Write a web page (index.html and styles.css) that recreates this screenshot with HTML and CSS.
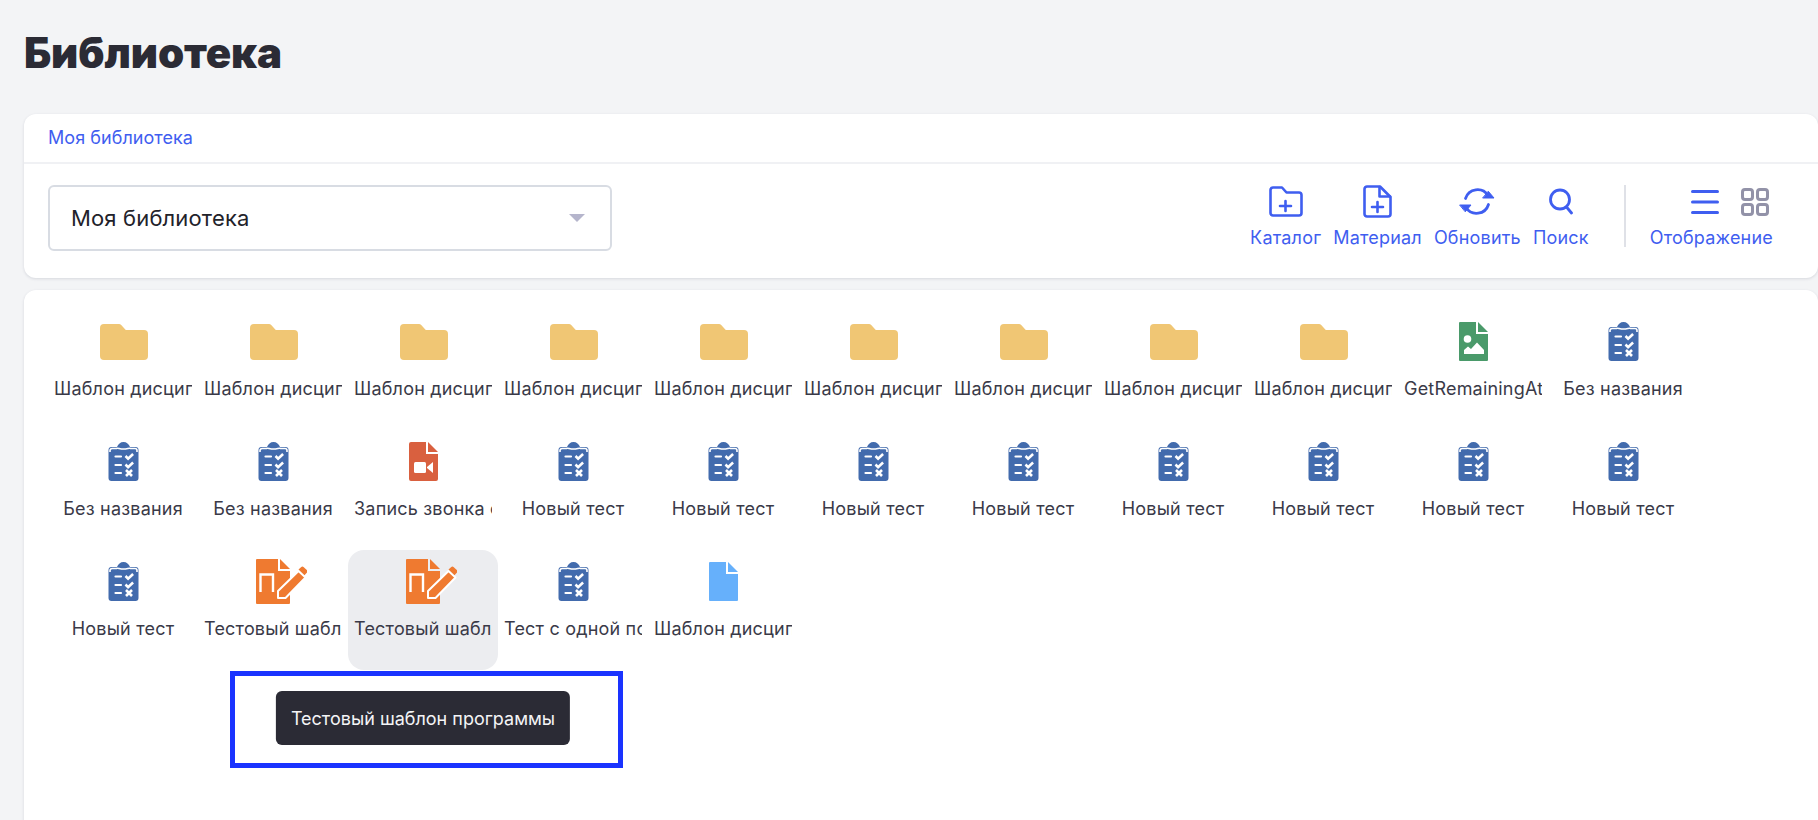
FILE: index.html
```html
<!DOCTYPE html>
<html lang="ru">
<head>
<meta charset="utf-8">
<title>Библиотека</title>
<link rel="stylesheet" href="styles.css">
</head>
<body>
<svg class="defs" width="0" height="0" aria-hidden="true">
  <symbol id="i-folder" viewBox="0 0 48 36"><path fill="#f0c674" d="M4 0H19a3 3 0 0 1 2.2 1l4.600 5H44a4 4 0 0 1 4 4V32a4 4 0 0 1-4 4H4a4 4 0 0 1-4-4V4a4 4 0 0 1 4-4Z"/></symbol>
  <symbol id="i-test" viewBox="0 0 30 39">
    <path fill="#426bad" d="M3 5h5.500C9.500 2 12 0 15 0s5.500 2 6.500 5H27a3 3 0 0 1 3 3v28a3 3 0 0 1-3 3H3a3 3 0 0 1-3-3V8a3 3 0 0 1 3-3Z"/>
    <path fill="none" stroke="#fff" stroke-width="1.600" d="M1.500 10V8.500A2 2 0 0 1 3.500 6.500H8c1-1 3 .5 7 .5s6-1.500 7-.5h4.500a2 2 0 0 1 2 2V10"/>
    <path fill="none" stroke="#fff" stroke-width="2.200" stroke-linecap="round" d="M7 14.500h5.500M7 23h5.500M7 31h5.500"/>
    <path fill="none" stroke="#fff" stroke-width="2.600" d="M17 14l2.600 2.600 5-4.600M17 22.500l2.600 2.600 5-4.600M17.500 28l6 6M23.500 28l-6 6"/>
  </symbol>
  <symbol id="i-image" viewBox="0 0 29 39">
    <path fill="#4a9a6a" d="M1 0H17V12H29V38a1 1 0 0 1-1 1H1a1 1 0 0 1-1-1V1a1 1 0 0 1 1-1Z"/>
    <path fill="#4a9a6a" d="M19 0l10 10H19Z"/>
    <circle cx="8.500" cy="17" r="3.800" fill="#fff"/>
    <path fill="#fff" d="M5 32v-4l4-3.500 3 2.500 6-6.500 7 7.500v4Z"/>
  </symbol>
  <symbol id="i-video" viewBox="0 0 29 39">
    <path fill="#d9603f" d="M2 0H17V12H29V37a2 2 0 0 1-2 2H2a2 2 0 0 1-2-2V2a2 2 0 0 1 2-2Z"/>
    <path fill="#d9603f" d="M19 0l10 10H19Z"/>
    <rect x="5" y="20" width="12" height="11" rx="1.500" fill="#fff"/>
    <path fill="#fff" d="M18 25l6-5v11l-6-5Z"/>
  </symbol>
  <symbol id="i-file" viewBox="0 0 29 39">
    <path fill="#66b0fb" d="M1 0H17V12H29V38a1 1 0 0 1-1 1H1a1 1 0 0 1-1-1V1a1 1 0 0 1 1-1Z"/>
    <path fill="#66b0fb" d="M19 0l10 10H19Z"/>
  </symbol>
  <symbol id="i-program" viewBox="0 0 51 45">
    <path fill="#ef7a30" d="M1 0H22V12H34V44a1 1 0 0 1-1 1H1a1 1 0 0 1-1-1V1a1 1 0 0 1 1-1Z"/>
    <path fill="#ef7a30" d="M24 0l10 10H24Z"/>
    <path fill="none" stroke="#fff" stroke-width="2.400" d="M4.500 33V15.500H17V33"/>
    <path fill="#ef7a30" stroke="#fff" stroke-width="2" stroke-linejoin="round" d="M22 32l20.500-20 7 6.500L29.500 39H22Z"/>
    <path fill="#ef7a30" d="M42.500 10.500l2.500-2.300a2 2 0 0 1 2.800 0l3 2.800a2 2 0 0 1 0 2.800l-2.300 2.400Z"/>
  </symbol>
</svg>

<h1 class="page-title">Библиотека</h1>

<section class="card top-card">
  <div class="crumbs"><a class="crumb">Моя библиотека</a></div>
  <div class="toolbar">
    <div class="select"><span>Моя библиотека</span><i class="caret"></i></div>
    <div class="actions">
      <button class="action">
        <svg class="tool" width="34" height="31" viewBox="0 0 34 31" fill="none" stroke="#3f5ef0" stroke-width="2.600" stroke-linejoin="round" stroke-linecap="round"><path d="M4 1.500H13l4.500 5H30a2.500 2.500 0 0 1 2.500 2.500V27a2.500 2.500 0 0 1-2.500 2.500H4A2.500 2.500 0 0 1 1.500 27V4A2.500 2.500 0 0 1 4 1.500Z"/><path d="M11 20h11M16.500 15v10"/></svg>
        <span>Каталог</span>
      </button>
      <button class="action">
        <svg class="tool" width="29" height="33" viewBox="0 0 29 33" fill="none" stroke="#3f5ef0" stroke-width="2.600" stroke-linejoin="round" stroke-linecap="round"><path d="M4 1.500H17L27.500 12V29a2.500 2.500 0 0 1-2.500 2.500H4A2.500 2.500 0 0 1 1.500 29V4A2.500 2.500 0 0 1 4 1.500Z"/><path d="M16.500 2v9.500H27" /><path d="M9 22h11M14.500 17v10"/></svg>
        <span>Материал</span>
      </button>
      <button class="action">
        <svg class="tool" width="36" height="31" viewBox="0 0 36 31" fill="none" stroke="#3f5ef0" stroke-width="2.800" stroke-linecap="round"><path d="M6.500 12.500A12.500 12.500 0 0 1 29 9.500"/><path d="M29.500 18.500A12.500 12.500 0 0 1 7 21.500"/><path fill="#3f5ef0" stroke-width="1" stroke-linejoin="round" d="M24 12h11l-5.500-6.500ZM1 19h11L6.500 25.500Z"/></svg>
        <span>Обновить</span>
      </button>
      <button class="action">
        <svg class="tool" width="24" height="26" viewBox="0 0 24 26" fill="none" stroke="#3f5ef0" stroke-width="2.800" stroke-linecap="round"><circle cx="11" cy="11" r="9.500"/><path d="M17.500 18.500l5 6"/></svg>
        <span>Поиск</span>
      </button>
      <div class="divider"></div>
      <div class="action view">
        <div class="view-icons">
          <svg width="28" height="24" viewBox="0 0 28 24" fill="#3f5ef0"><rect width="28" height="3" rx="1.500"/><rect y="10.500" width="28" height="3" rx="1.500"/><rect y="21" width="28" height="3" rx="1.500"/></svg>
          <svg width="28" height="28" viewBox="0 0 28 28" fill="none" stroke="#9292a8" stroke-width="3"><rect x="1.500" y="1.500" width="10" height="10" rx="2.500"/><rect x="16.500" y="1.500" width="10" height="10" rx="2.500"/><rect x="1.500" y="16.500" width="10" height="10" rx="2.500"/><rect x="16.500" y="16.500" width="10" height="10" rx="2.500"/></svg>
        </div>
        <span>Отображение</span>
      </div>
    </div>
  </div>
</section>

<main class="card files">
  <div class="item"><div class="icon"><svg class="folder" width="48" height="36"><use href="#i-folder"/></svg></div><div class="name">Шаблон дисциплины</div></div>
  <div class="item"><div class="icon"><svg class="folder" width="48" height="36"><use href="#i-folder"/></svg></div><div class="name">Шаблон дисциплины</div></div>
  <div class="item"><div class="icon"><svg class="folder" width="48" height="36"><use href="#i-folder"/></svg></div><div class="name">Шаблон дисциплины</div></div>
  <div class="item"><div class="icon"><svg class="folder" width="48" height="36"><use href="#i-folder"/></svg></div><div class="name">Шаблон дисциплины</div></div>
  <div class="item"><div class="icon"><svg class="folder" width="48" height="36"><use href="#i-folder"/></svg></div><div class="name">Шаблон дисциплины</div></div>
  <div class="item"><div class="icon"><svg class="folder" width="48" height="36"><use href="#i-folder"/></svg></div><div class="name">Шаблон дисциплины</div></div>
  <div class="item"><div class="icon"><svg class="folder" width="48" height="36"><use href="#i-folder"/></svg></div><div class="name">Шаблон дисциплины</div></div>
  <div class="item"><div class="icon"><svg class="folder" width="48" height="36"><use href="#i-folder"/></svg></div><div class="name">Шаблон дисциплины</div></div>
  <div class="item"><div class="icon"><svg class="folder" width="48" height="36"><use href="#i-folder"/></svg></div><div class="name">Шаблон дисциплины</div></div>
  <div class="item"><div class="icon"><svg width="29" height="39"><use href="#i-image"/></svg></div><div class="name">GetRemainingAttempts</div></div>
  <div class="item"><div class="icon"><svg width="31" height="39"><use href="#i-test"/></svg></div><div class="name">Без названия</div></div>

  <div class="item"><div class="icon"><svg width="31" height="39"><use href="#i-test"/></svg></div><div class="name">Без названия</div></div>
  <div class="item"><div class="icon"><svg width="31" height="39"><use href="#i-test"/></svg></div><div class="name">Без названия</div></div>
  <div class="item"><div class="icon"><svg width="29" height="39"><use href="#i-video"/></svg></div><div class="name">Запись звонка от пятницы</div></div>
  <div class="item"><div class="icon"><svg width="31" height="39"><use href="#i-test"/></svg></div><div class="name">Новый тест</div></div>
  <div class="item"><div class="icon"><svg width="31" height="39"><use href="#i-test"/></svg></div><div class="name">Новый тест</div></div>
  <div class="item"><div class="icon"><svg width="31" height="39"><use href="#i-test"/></svg></div><div class="name">Новый тест</div></div>
  <div class="item"><div class="icon"><svg width="31" height="39"><use href="#i-test"/></svg></div><div class="name">Новый тест</div></div>
  <div class="item"><div class="icon"><svg width="31" height="39"><use href="#i-test"/></svg></div><div class="name">Новый тест</div></div>
  <div class="item"><div class="icon"><svg width="31" height="39"><use href="#i-test"/></svg></div><div class="name">Новый тест</div></div>
  <div class="item"><div class="icon"><svg width="31" height="39"><use href="#i-test"/></svg></div><div class="name">Новый тест</div></div>
  <div class="item"><div class="icon"><svg width="31" height="39"><use href="#i-test"/></svg></div><div class="name">Новый тест</div></div>

  <div class="item"><div class="icon"><svg width="31" height="39"><use href="#i-test"/></svg></div><div class="name">Новый тест</div></div>
  <div class="item"><div class="icon"><svg class="program" width="51" height="45"><use href="#i-program"/></svg></div><div class="name">Тестовый шаблон программы</div></div>
  <div class="item selected"><div class="icon"><svg class="program" width="51" height="45"><use href="#i-program"/></svg></div><div class="name">Тестовый шаблон программы</div>
    <div class="tooltip">Тестовый шаблон программы</div>
  </div>
  <div class="item"><div class="icon"><svg width="31" height="39"><use href="#i-test"/></svg></div><div class="name">Тест с одной попыткой</div></div>
  <div class="item"><div class="icon"><svg width="29" height="39"><use href="#i-file"/></svg></div><div class="name">Шаблон дисциплины</div></div>
</main>

<div class="highlight"></div>
</body>
</html>
```

FILE: styles.css
```css
* { box-sizing: border-box; }
html, body { height: 100%; }
body {
  margin: 0;
  height: 820px;
  overflow: hidden;
  background: #f3f4f6;
  color: #2b2b35;
  font-family: Inter, "Noto Sans", sans-serif;
  padding-left: 24px;
  position: relative;
}
.defs { position: absolute; }
.page-title {
  margin: 0;
  height: 114px;
  padding-top: 28px;
  font-size: 42px;
  line-height: 50px;
  font-weight: 900;
  letter-spacing: -0.1px;
}
.card {
  background: #fff;
  border-radius: 12px;
  box-shadow: 0 1px 3px rgba(40, 50, 80, 0.14);
}
.top-card { height: 164px; }
.crumbs {
  height: 50px;
  padding: 0 24px 2px;
  display: flex;
  align-items: center;
  border-bottom: 2px solid #f0f1f4;
}
.crumb { color: #3f5ef0; font-size: 18px; letter-spacing: 0.05px; }
.toolbar {
  display: flex;
  justify-content: space-between;
  padding: 21px 45px 0 24px;
}
.select {
  width: 564px;
  height: 66px;
  border: 2px solid #d8dce3;
  border-radius: 6px;
  display: flex;
  align-items: center;
  justify-content: space-between;
  padding: 0 25px 0 21px;
  font-size: 22px;
  letter-spacing: 0.15px;
  color: #22222a;
}
.caret {
  width: 0;
  height: 0;
  border-left: 8px solid transparent;
  border-right: 8px solid transparent;
  border-top: 8px solid #b5b5cc;
}
.actions { display: flex; align-items: flex-start; gap: 12px; }
.action {
  border: 0;
  background: none;
  padding: 0;
  font: inherit;
  font-size: 18px;
  letter-spacing: 0.2px;
  line-height: 20px;
  color: #3f5ef0;
  display: flex;
  flex-direction: column;
  align-items: center;
  gap: 0;
}
.tool { height: 33px; margin-bottom: 10px; }
.divider { width: 2px; height: 62px; background: #dfe1e7; margin: 0 12px 0 23px; }
.view-icons { display: flex; gap: 22px; align-items: center; height: 33px; margin-bottom: 10px; margin-left: 37px; }
.files {
  margin-top: 12px;
  height: 560px;
  padding: 20px 24px;
  display: grid;
  grid-template-columns: repeat(auto-fill, 150px);
  grid-auto-rows: 120px;
  align-content: start;
}
.item {
  position: relative;
  display: flex;
  flex-direction: column;
  align-items: center;
  padding: 0 6px;
  border-radius: 16px;
  min-width: 0;
}
.item.selected { background: #ecedf0; }
.icon { height: 63px; display: flex; align-items: center; justify-content: center; }
.folder { margin-left: 2px; }
.program { margin-left: 17px; }
.name {
  width: 100%;
  margin-top: 4px;
  font-size: 18px;
  letter-spacing: 0.2px;
  line-height: 24px;
  color: #3a3a48;
  text-align: center;
  white-space: nowrap;
  overflow: hidden;
  height: 24px;
}
.tooltip {
  position: absolute;
  top: 141px;
  left: 50%;
  transform: translateX(-50%);
  height: 54px;
  padding: 0 15px;
  display: flex;
  align-items: center;
  white-space: nowrap;
  background: #2b2b35;
  color: #f4f4f6;
  font-size: 18px;
  border-radius: 6px;
  z-index: 2;
}
.highlight {
  position: absolute;
  left: 230px;
  top: 671px;
  width: 393px;
  height: 97px;
  border: 5px solid #1a33ff;
  z-index: 3;
}
```
